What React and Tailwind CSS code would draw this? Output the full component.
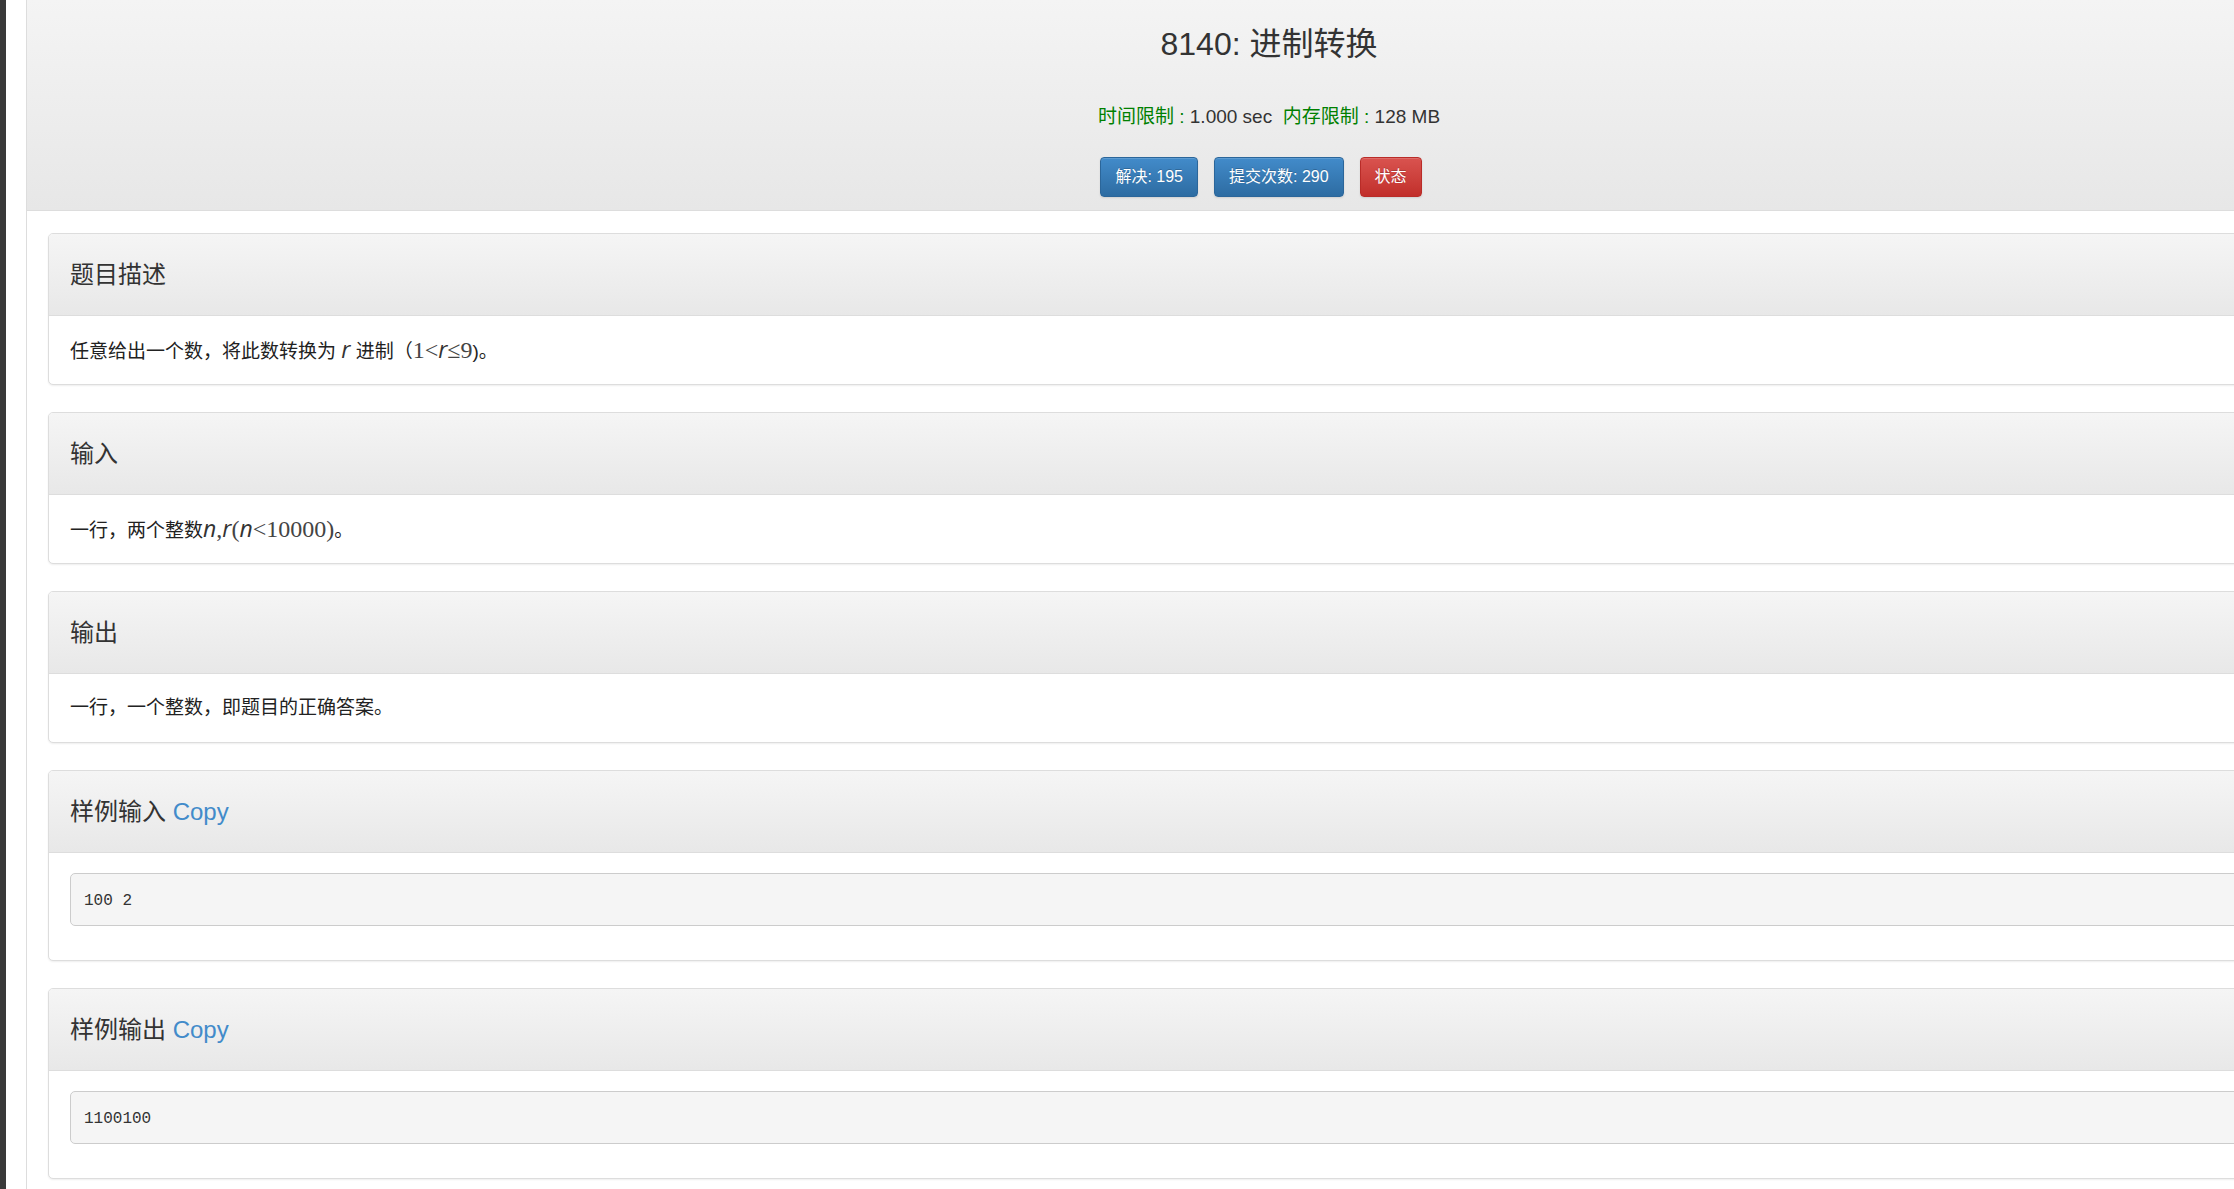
import React from "react";

const mathItalic = "font-['Open_Sans'] text-[23px] leading-7 italic text-[#333]";
const mathSerif = "font-['Liberation_Serif',serif] text-2xl leading-7 text-[#444]";

function Var({ children }) {
  return <i className={mathItalic}>{children}</i>;
}

function Num({ children }) {
  return <span className={mathSerif}>{children}</span>;
}

function Panel({ title, copy, children }) {
  return (
    <section className="overflow-hidden rounded-[5px] border border-[#ddd] bg-white shadow-[0_1px_2px_rgba(0,0,0,0.07)]">
      <div className="flex h-[82px] items-center border-b border-[#ddd] bg-linear-to-b from-[#f5f5f5] to-[#e8e8e8] px-[21px]">
        <h4 className="text-2xl leading-8 text-[#333]">
          {title}
          {copy && (
            <>
              {" "}
              <a href="#copy" className="text-[#428bca]">
                Copy
              </a>
            </>
          )}
        </h4>
      </div>
      {children}
    </section>
  );
}

function TextBody({ children }) {
  return (
    <p className="flex h-[68px] items-center px-[21px] text-[19px] leading-7 text-[#222]">
      <span>{children}</span>
    </p>
  );
}

function SampleBody({ children }) {
  return (
    <div className="px-[21px] pt-5 pb-[34px]">
      <pre className="rounded-[5px] border border-[#ccc] bg-[#f5f5f5] px-[13px] pt-[15px] pb-[11px] font-['Liberation_Mono',monospace] text-base leading-[25px] text-[#333]">
        {children}
      </pre>
    </div>
  );
}

const buttonBase =
  "h-10 rounded-[4px] border px-[14px] text-base leading-6 text-white shadow-[inset_0_1px_0_rgba(255,255,255,0.15),0_1px_2px_rgba(0,0,0,0.1)] [text-shadow:0_-1px_0_rgba(0,0,0,0.2)]";
const primary = "border-[#2b669a] bg-linear-to-b from-[#428bca] to-[#2d6ca2]";
const danger = "border-[#b92c28] bg-linear-to-b from-[#d9534f] to-[#c12e2a]";

export default function App() {
  return (
    <div className="flex min-h-screen overflow-hidden bg-white font-['Liberation_Sans','Noto_Sans_CJK_SC',sans-serif]" lang="zh-CN">
      <div className="w-1.5 shrink-0 bg-[#393939]" />
      <main className="-mr-[277px] ml-5 min-w-0 flex-1 border-l border-[#ddd]">
        <header className="border-b border-[#ddd] bg-linear-to-b from-[#f4f4f4] to-[#e7e7e7] pt-[22px] pb-[13px] text-center text-[#333]">
          <h3 className="text-[32px] leading-[44px]">8140: 进制转换</h3>
          <p className="mt-[37px] text-[19px] leading-7">
            <span className="text-[#008000]">时间限制 : </span>1.000 sec&nbsp;&nbsp;
            <span className="text-[#008000]">内存限制 : </span>128 MB
          </p>
          <div className="mt-[26px] mr-4 flex justify-center gap-4">
            <button type="button" className={`${buttonBase} ${primary}`}>
              解决: 195
            </button>
            <button type="button" className={`${buttonBase} ${primary}`}>
              提交次数: 290
            </button>
            <button type="button" className={`${buttonBase} ${danger}`}>
              状态
            </button>
          </div>
        </header>
        <div className="flex flex-col gap-[27px] px-[21px] pt-[22px]">
          <Panel title="题目描述">
            <TextBody>
              任意给出一个数，将此数转换为 <Var>r</Var> 进制（<Num>1&lt;</Num>
              <Var>r</Var>
              <Num>≤9</Num>)。
            </TextBody>
          </Panel>
          <Panel title="输入">
            <TextBody>
              一行，两个整数<Var>n</Var>
              <Num>,</Num>
              <Var>r</Var>
              <Num>(</Num>
              <Var>n</Var>
              <Num>&lt;10000)</Num>。
            </TextBody>
          </Panel>
          <Panel title="输出">
            <TextBody>一行，一个整数，即题目的正确答案。</TextBody>
          </Panel>
          <Panel title="样例输入" copy>
            <SampleBody>100 2</SampleBody>
          </Panel>
          <Panel title="样例输出" copy>
            <SampleBody>1100100</SampleBody>
          </Panel>
        </div>
      </main>
    </div>
  );
}
